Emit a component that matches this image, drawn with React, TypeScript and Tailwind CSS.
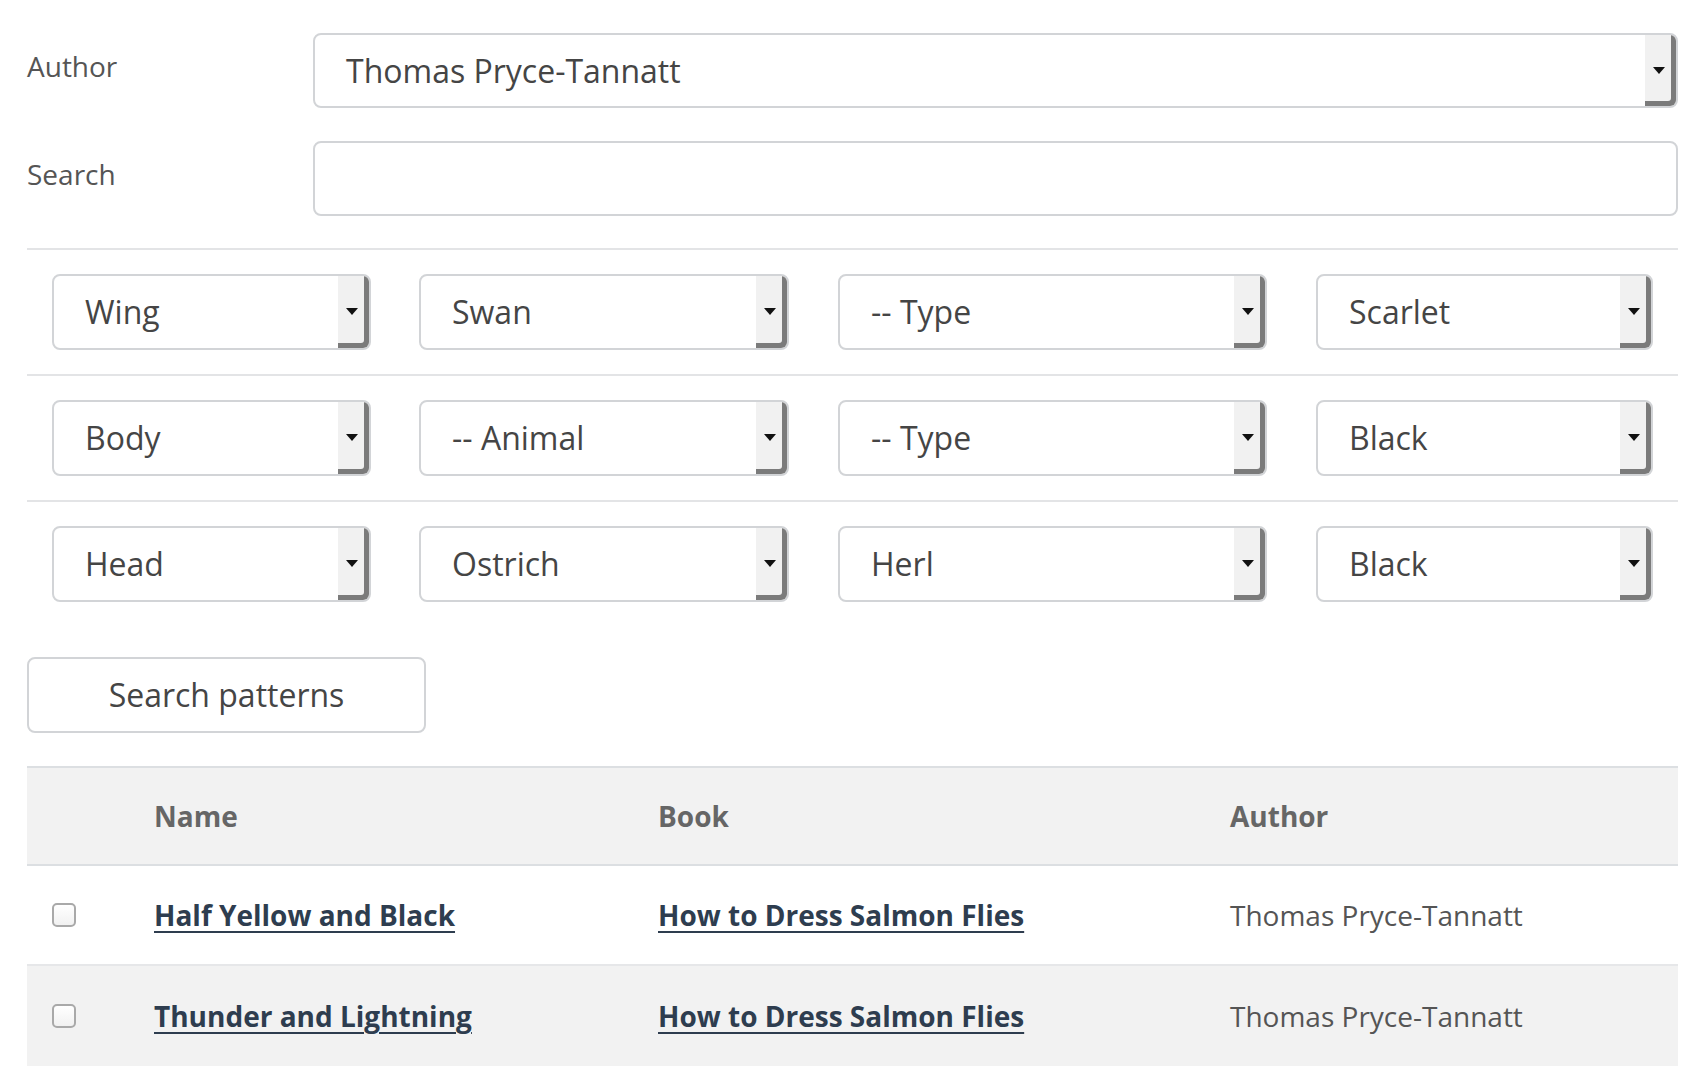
import React from 'react';

const font = { fontFamily: '"Open Sans", "Noto Sans", sans-serif' };

const Select = ({ value, className = '' }: { value: string; className?: string }) => (
  <div className={`flex items-stretch h-[76px] rounded-[8px] border-2 border-[#d2d4d7] bg-white overflow-hidden ${className}`}>
    <div className="flex-1 flex items-center pl-[31px] text-[32px] text-[#454545] leading-none truncate">{value}</div>
    <div className="w-[31px] bg-[#f1f1f1] flex items-center justify-center shadow-[inset_-5px_-5px_0_#7b7b7b] rounded-br-[3px] pr-[4px]">
      <svg width="12" height="8" viewBox="0 0 12 8">
        <path d="M0 0 H12 L6 7 Z" fill="#111" />
      </svg>
    </div>
  </div>
);

const filterRows = [
  ['Wing', 'Swan', '-- Type', 'Scarlet'],
  ['Body', '-- Animal', '-- Type', 'Black'],
  ['Head', 'Ostrich', 'Herl', 'Black'],
];

// column cells and the select inside each
const cells = ['w-[367px]', 'w-[419px]', 'w-[478px]', 'w-[337px]'];
const widths = ['w-[319px]', 'w-[370px]', 'w-[429px]', 'w-[337px]'];

const results = [
  { name: 'Half Yellow and Black', book: 'How to Dress Salmon Flies', author: 'Thomas Pryce-Tannatt' },
  { name: 'Thunder and Lightning', book: 'How to Dress Salmon Flies', author: 'Thomas Pryce-Tannatt' },
];

const Checkbox = () => (
  <span className="block w-[24px] h-[24px] rounded-[5px] border-2 border-[#a9a9a9] bg-gradient-to-b from-white to-[#f1f1f1]" />
);

export default function App() {
  return (
    <div className="min-h-screen bg-white pt-[33px] pl-[27px]" style={font}>
      <div className="w-[1651px]">
        {/* Author / Search */}
        <div className="flex">
          <div className="w-[286px] pt-[13px] text-[28px] leading-[40px] text-[#555]">Author</div>
          <div className="flex-1">
            <Select value="Thomas Pryce-Tannatt" className="!h-[75px]" />
          </div>
        </div>
        <div className="flex mt-[33px]">
          <div className="w-[286px] pt-[13px] text-[28px] leading-[40px] text-[#555]">Search</div>
          <div className="flex-1 h-[75px] rounded-[8px] border-2 border-[#d2d4d7] bg-white" />
        </div>

        {/* Ingredient filters */}
        <div className="mt-[32px]">
          {filterRows.map((row, i) => (
            <div key={i} className="border-t-2 border-[#e3e4e6] py-[24px] pl-[25px] flex">
              {row.map((v, j) => (
                <div key={j} className={cells[j]}>
                  <Select value={v} className={widths[j]} />
                </div>
              ))}
            </div>
          ))}
        </div>

        <button className="mt-[31px] w-[399px] h-[76px] rounded-[8px] border-2 border-[#d2d4d7] bg-white text-[32px] text-[#454545]" style={font}>
          Search patterns
        </button>

        {/* Results */}
        <div className="mt-[33px] text-[28px]">
          <div className="flex items-center h-[100px] bg-[#f2f2f2] border-t-2 border-b-2 border-[#dcdfe2] font-bold text-[#666]">
            <div className="w-[127px]" />
            <div className="w-[504px]">Name</div>
            <div className="w-[572px]">Book</div>
            <div className="flex-1">Author</div>
          </div>
          {results.map((r, i) => (
            <div
              key={i}
              className={`flex items-center h-[100px] ${i === 0 ? 'bg-white border-b-2 border-[#e6e7e9]' : 'bg-[#f2f2f2]'}`}
            >
              <div className="w-[127px] pl-[25px]">
                <Checkbox />
              </div>
              <div className="w-[504px]">
                <a href="#" className="font-bold text-[#2e3d4f] underline decoration-2 underline-offset-[5px]">{r.name}</a>
              </div>
              <div className="w-[572px]">
                <a href="#" className="font-bold text-[#2e3d4f] underline decoration-2 underline-offset-[5px]">{r.book}</a>
              </div>
              <div className="flex-1 text-[#555]">{r.author}</div>
            </div>
          ))}
        </div>
      </div>
    </div>
  );
}
